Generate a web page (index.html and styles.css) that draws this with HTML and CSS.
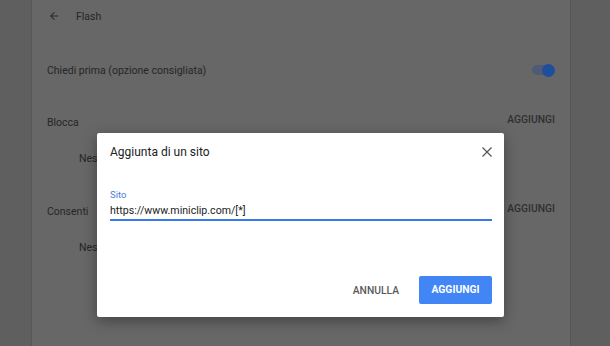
FILE: index.html
```html
<!DOCTYPE html>
<html lang="it">
<head>
  <meta charset="UTF-8" />
  <title>Flash - Impostazioni</title>
  <link rel="stylesheet" href="styles.css">
</head>
<body>
  <div class="page">
    <div class="card">
      <div class="header">
        <svg class="back" width="12" height="12" viewBox="0 0 24 24"><path d="M20 11H7.8l5.6-5.6L12 4l-8 8 8 8 1.4-1.4L7.8 13H20z" fill="#2a2a2a"/></svg>
        <span>Flash</span>
      </div>
      <div class="row ask">
        <span>Chiedi prima (opzione consigliata)</span>
        <div class="toggle"><div class="knob"></div></div>
      </div>
      <div class="row section">
        <span>Blocca</span>
        <span class="add">AGGIUNGI</span>
      </div>
      <div class="row empty"><span>Nessun sito aggiunto</span></div>
      <div class="row section">
        <span>Consenti</span>
        <span class="add">AGGIUNGI</span>
      </div>
      <div class="row empty"><span>Nessun sito aggiunto</span></div>
    </div>
  </div>

  <div class="dialog">
    <div class="dialog-title">
      <span>Aggiunta di un sito</span>
      <svg class="close" width="10" height="10" viewBox="0 0 10 10"><path d="M0.5 0.5L9.5 9.5M9.5 0.5L0.5 9.5" stroke="#555" stroke-width="1.2"/></svg>
    </div>
    <div class="field">
      <label>Sito</label>
      <div class="input">https://www.miniclip.com/[*]</div>
    </div>
    <div class="actions">
      <span class="cancel">ANNULLA</span>
      <span class="confirm">AGGIUNGI</span>
    </div>
  </div>
</body>
</html>
```

FILE: styles.css
```css
body {
  margin: 0;
  background: #5f5f5f;
  font-family: Roboto, "Liberation Sans", sans-serif;
  color: #262626;
  overflow: hidden;
}
.page {
  height: 346px;
  padding: 0 39px 0 31px;
}
.card {
  height: 100%;
  background: #676767;
  border-left: 1px solid #575757;
  border-right: 1px solid #575757;
  padding: 0 15px;
  font-size: 10.5px;
}
.header {
  height: 32px;
  display: flex;
  align-items: center;
  gap: 16px;
  padding-left: 1px;
  font-size: 10.5px;
}
.row {
  display: flex;
  align-items: center;
  justify-content: space-between;
}
.ask {
  height: 44px;
  margin-top: 16px;
}
.section {
  height: 44px;
  margin-top: 8px;
}
.section .add {
  font-size: 10.3px;
  font-weight: 500;
  color: #2f2f2f;
  margin-top: -6px;
}
.empty {
  height: 28px;
  padding-left: 32px;
}
.empty + .section {
  margin-top: 17px;
}
.toggle {
  position: relative;
  width: 17px;
  height: 10px;
  border-radius: 5px;
  background: #4f5a74;
  margin-right: 6px;
}
.knob {
  position: absolute;
  right: -6px;
  top: -1.5px;
  width: 13px;
  height: 13px;
  border-radius: 50%;
  background: #1f4e9c;
}
.dialog {
  position: absolute;
  left: 97px;
  top: 133px;
  width: 407px;
  height: 184px;
  background: #fff;
  border-radius: 2px;
  box-shadow: 0 4px 14px rgba(0, 0, 0, 0.35);
  box-sizing: border-box;
  padding: 0 12px 0 13px;
  display: flex;
  flex-direction: column;
}
.dialog-title {
  height: 38px;
  display: flex;
  align-items: center;
  justify-content: space-between;
  font-size: 12px;
  color: #222;
}
.field {
  margin-top: 17px;
}
.field label {
  display: block;
  font-size: 9.5px;
  color: #4a7fd8;
  line-height: 14px;
}
.input {
  font-size: 10.6px;
  color: #222;
  line-height: 17px;
  border-bottom: 2px solid #3b78e7;
}
.actions {
  margin-top: auto;
  margin-bottom: 13px;
  display: flex;
  justify-content: flex-end;
  align-items: center;
  gap: 20px;
}
.cancel {
  font-size: 10.3px;
  font-weight: 500;
  color: #5a5a5a;
}
.confirm {
  width: 73px;
  height: 28px;
  line-height: 28px;
  text-align: center;
  background: #4285f4;
  color: #fff;
  font-size: 10.3px;
  font-weight: 700;
  border-radius: 2px;
}
```
